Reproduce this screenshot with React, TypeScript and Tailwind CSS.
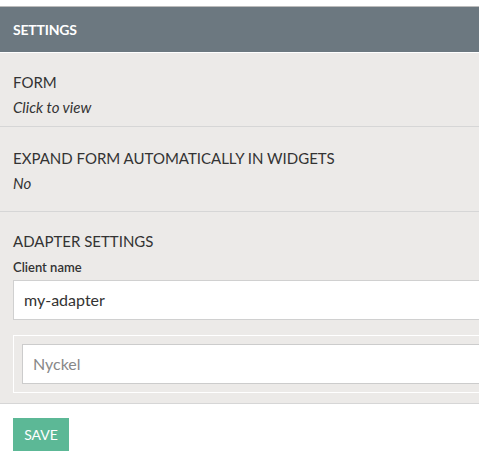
export default function App() {
  return (
    <div className="w-[479px] h-[468px] overflow-hidden bg-white font-['Lato','Liberation_Sans',sans-serif] text-[#333]">
      <div className="w-[540px] pt-[6px]">
        {/* Header */}
        <div className="h-[47px] bg-[#6c7880] border-t border-[#bcbcbc] border-b border-b-white px-[13px] flex items-center">
          <h2 className="text-[14px] font-bold text-white tracking-[-0.2px]">SETTINGS</h2>
        </div>

        <div className="bg-[#eceae8]">
          <div className="h-[74px] px-[13px] pt-[19px] border-b border-[#d6d6d6]">
            <h3 className="text-[15px] leading-[20px]">FORM</h3>
            <p className="mt-[5px] text-[15px] italic leading-[20px]">Click to view</p>
          </div>

          <div className="h-[85px] px-[13px] pt-[21px] border-b border-[#d6d6d6]">
            <h3 className="text-[15px] leading-[20px]">EXPAND FORM AUTOMATICALLY IN WIDGETS</h3>
            <p className="mt-[5px] text-[15px] italic leading-[20px]">No</p>
          </div>

          <div className="px-[13px] pt-[19px] pb-[10px] border-b border-[#d6d6d6]">
            <h3 className="text-[15px] leading-[20px]">ADAPTER SETTINGS</h3>
            <label className="block mt-[8px] text-[13px] font-semibold leading-[16px]">Client name</label>
            <div className="mt-[5px] h-[40px] bg-white border border-[#d0d0d0] px-[10px] flex items-center text-[16px]">
              my-adapter
            </div>
            <div className="mt-[15px] border border-white p-[8px]">
              <div className="h-[40px] bg-white border border-[#cccccc] px-[10px] flex items-center text-[16px] text-[#888]">
                Nyckel
              </div>
            </div>
          </div>
        </div>

        <div className="px-[13px] pt-[14px]">
          <button className="h-[33px] w-[56px] bg-[#5cb896] text-white text-[14px] flex items-center justify-center">
            SAVE
          </button>
        </div>
      </div>
    </div>
  );
}
